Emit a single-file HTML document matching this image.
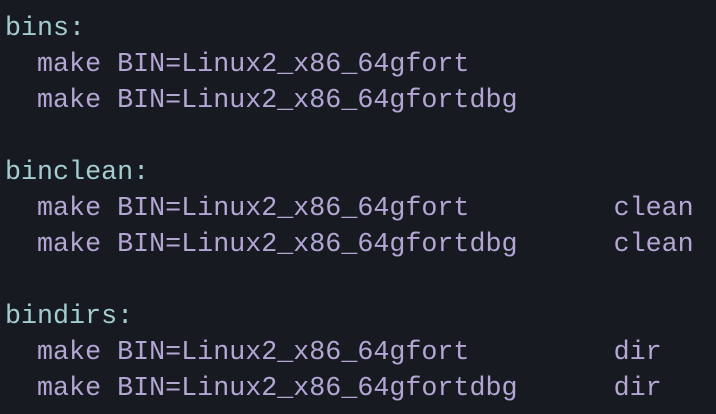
<!DOCTYPE html>
<html><head><meta charset="utf-8"><style>
html,body{margin:0;padding:0;background:#181a21;width:716px;height:414px;overflow:hidden}
pre{margin:0;position:absolute;left:5px;top:11px;font-family:"Liberation Mono",monospace;font-size:26.7px;line-height:36px;color:#b3a6d4;white-space:pre}
.t{color:#a2ced0}
</style></head><body>
<pre><span class="t">bins:</span>
  make BIN=Linux2_x86_64gfort
  make BIN=Linux2_x86_64gfortdbg

<span class="t">binclean:</span>
  make BIN=Linux2_x86_64gfort         clean
  make BIN=Linux2_x86_64gfortdbg      clean

<span class="t">bindirs:</span>
  make BIN=Linux2_x86_64gfort         dir
  make BIN=Linux2_x86_64gfortdbg      dir</pre>
</body></html>
